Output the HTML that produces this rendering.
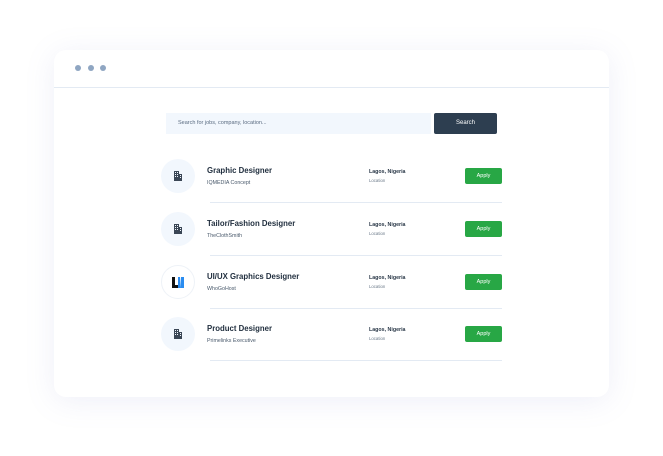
<!DOCTYPE html>
<html><head><style>
body{margin:0;width:663px;height:456px;background:#fff;font-family:"Liberation Sans",sans-serif;position:relative;overflow:hidden}
.card{position:absolute;left:54px;top:50px;width:555px;height:347px;background:#fff;border-radius:12px;box-shadow:0 4px 30px rgba(120,130,200,.13)}
.hdr{position:absolute;left:0;right:0;top:37px;border-top:1px solid #e3eaf3}
.dot{position:absolute;top:15px;width:6px;height:6px;border-radius:50%;background:#8fa6c2}
.inp{position:absolute;left:112px;top:63px;width:265px;height:21px;background:#f2f7fd;font-size:5.5px;color:#5a6b80;line-height:21px;padding-left:12px;box-sizing:border-box}
.btn{position:absolute;left:380px;top:63px;width:63px;height:21px;background:#2d3e50;border-radius:2px;color:#fff;font-size:6px;text-align:center;line-height:21px}
.row{position:absolute;left:0;width:555px;height:53px}
.ic{position:absolute;left:107px;top:-17px;width:34px;height:34px;border-radius:50%;background:#f2f7fd}
.t{position:absolute;left:153px;top:-10px;font-size:7.8px;font-weight:bold;color:#1f2d3d}
.c{position:absolute;left:153px;top:4px;font-size:5.3px;color:#4a5a6c}
.l{position:absolute;left:315px;top:-7px;font-size:5.3px;font-weight:bold;color:#2a3848}
.ls{position:absolute;left:315px;top:2px;font-size:4.3px;color:#6a7888}
.a{position:absolute;left:411px;top:-8px;width:37px;height:16px;background:#28a745;border-radius:2px;color:#fff;font-size:5.5px;text-align:center;line-height:16px}
.d{position:absolute;left:156px;top:26px;width:292px;border-top:1px solid #e3eaf3}
</style></head><body>
<div class="card">
<div class="dot" style="left:21px"></div><div class="dot" style="left:34px"></div><div class="dot" style="left:46px"></div>
<div class="hdr"></div>
<div class="inp">Search for jobs, company, location...</div>
<div class="btn">Search</div>
<div class="row" style="top:126px"><div class="ic"><svg style="position:absolute;left:12px;top:11px" width="10" height="11" viewBox="0 0 10 11"><path d="M1 1h5v10H1zM6 4h3v7H6z" fill="#3a4655"/><path d="M2 2h1v1H2zM4 2h1v1H4zM2 4h1v1H2zM4 4h1v1H4zM2 6h1v1H2zM4 6h1v1H4zM7 5h1v1H7zM7 7h1v1H7z" fill="#f2f7fd"/></svg></div><div class="t">Graphic Designer</div><div class="c">IQMEDIA Concept</div><div class="l">Lagos, Nigeria</div><div class="ls">Location</div><div class="a">Apply</div><div class="d"></div></div>
<div class="row" style="top:179px"><div class="ic"><svg style="position:absolute;left:12px;top:11px" width="10" height="11" viewBox="0 0 10 11"><path d="M1 1h5v10H1zM6 4h3v7H6z" fill="#3a4655"/><path d="M2 2h1v1H2zM4 2h1v1H4zM2 4h1v1H2zM4 4h1v1H4zM2 6h1v1H2zM4 6h1v1H4zM7 5h1v1H7zM7 7h1v1H7z" fill="#f2f7fd"/></svg></div><div class="t">Tailor/Fashion Designer</div><div class="c">TheClothSmith</div><div class="l">Lagos, Nigeria</div><div class="ls">Location</div><div class="a">Apply</div><div class="d"></div></div>
<div class="row" style="top:232px"><div class="ic" style="background:#fff;border:1px solid #eef2f7;box-sizing:border-box"><svg style="position:absolute;left:10px;top:11px" width="12" height="11" viewBox="0 0 12 11"><path d="M0 0h3v8h3v3H0z" fill="#111"/><path d="M6 0h2v11H6zM9 0h3v11H8z" fill="#2a8cf0"/></svg></div><div class="t">UI/UX Graphics Designer</div><div class="c">WhoGoHost</div><div class="l">Lagos, Nigeria</div><div class="ls">Location</div><div class="a">Apply</div><div class="d"></div></div>
<div class="row" style="top:284px"><div class="ic"><svg style="position:absolute;left:12px;top:11px" width="10" height="11" viewBox="0 0 10 11"><path d="M1 1h5v10H1zM6 4h3v7H6z" fill="#3a4655"/><path d="M2 2h1v1H2zM4 2h1v1H4zM2 4h1v1H2zM4 4h1v1H4zM2 6h1v1H2zM4 6h1v1H4zM7 5h1v1H7zM7 7h1v1H7z" fill="#f2f7fd"/></svg></div><div class="t">Product Designer</div><div class="c">Primelinks Executive</div><div class="l">Lagos, Nigeria</div><div class="ls">Location</div><div class="a">Apply</div><div class="d"></div></div>
</div>
</body></html>
